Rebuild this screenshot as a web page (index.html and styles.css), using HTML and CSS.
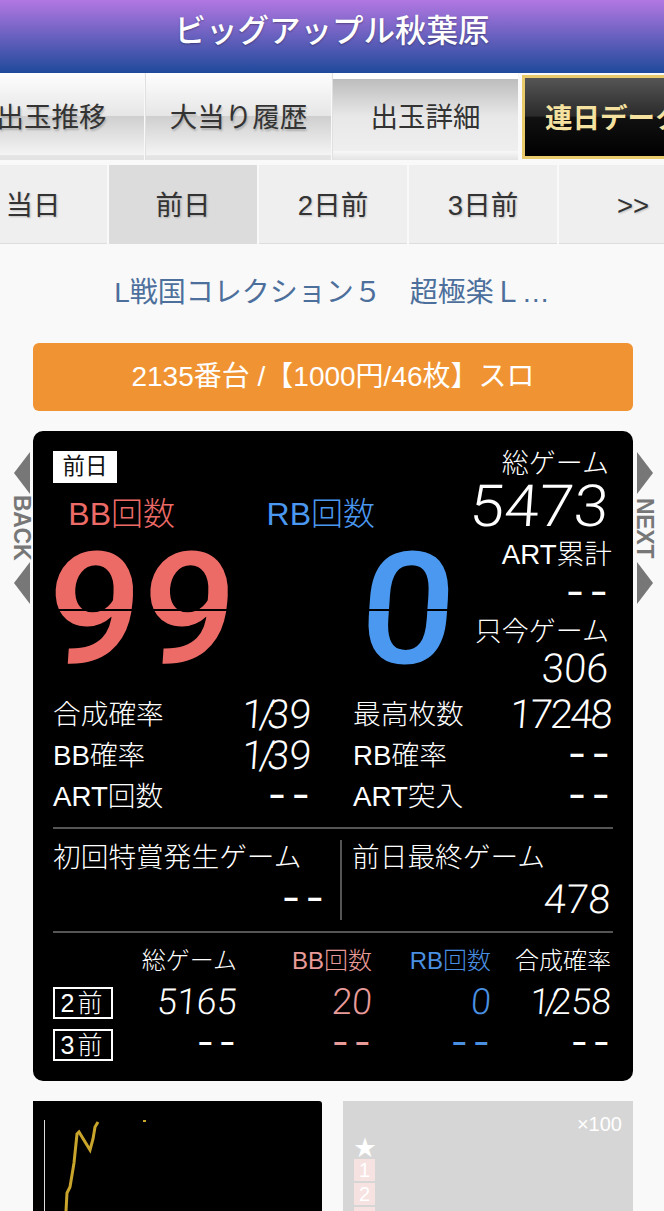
FILE: index.html
```html
<!DOCTYPE html>
<html lang="ja">
<head>
<meta charset="utf-8">
<title>ビッグアップル秋葉原</title>
<link rel="stylesheet" href="styles.css">
</head>
<body>
<header class="site-header">ビッグアップル秋葉原</header>
<nav class="tabs-main">
  <a class="tab">出玉推移</a>
  <a class="tab">大当り履歴</a>
  <a class="tab tab-current">出玉詳細</a>
  <a class="tab tab-gold">連日データ</a>
</nav>
<nav class="tabs-day">
  <a class="day">当日</a>
  <a class="day day-current">前日</a>
  <a class="day">2日前</a>
  <a class="day">3日前</a>
  <a class="day">&gt;&gt;</a>
</nav>
<h1 class="machine">L戦国コレクション５　超極楽Ｌ…</h1>
<div class="unit-bar">2135番台 /【1000円/46枚】スロ</div>
<main class="panel-wrap">
  <div class="side side-back">
    <svg class="tri" viewBox="0 0 16 42"><polygon points="16,0 0,21 16,42" /></svg>
    <span class="side-label">BACK</span>
    <svg class="tri" viewBox="0 0 16 42"><polygon points="16,0 0,21 16,42" /></svg>
  </div>
  <div class="side side-next">
    <svg class="tri" viewBox="0 0 16 42"><polygon points="0,0 16,21 0,42" /></svg>
    <span class="side-label">NEXT</span>
    <svg class="tri" viewBox="0 0 16 42"><polygon points="0,0 16,21 0,42" /></svg>
  </div>
  <section class="panel">
    <div class="top">
      <div class="top-left">
        <div class="badge">前日</div>
        <div class="counters">
          <div class="counter counter-bb">
            <div class="counter-label">BB回数</div>
            <div class="big-num"><span class="seg">99</span></div>
          </div>
          <div class="counter counter-rb">
            <div class="counter-label">RB回数</div>
            <div class="big-num"><span class="seg">0</span></div>
          </div>
        </div>
      </div>
      <div class="top-right">
        <div class="tr-label">総ゲーム</div>
        <div class="tr-big"><span class="seg">5473</span></div>
        <div class="tr-label tr-gap1 tr-art">ART累計</div>
        <div class="dash-line"><span class="seg dash">– –</span></div>
        <div class="tr-label tr-gap2">只今ゲーム</div>
        <div class="tr-mid"><span class="seg">306</span></div>
      </div>
    </div>
    <div class="stats">
      <div class="stat"><span>合成確率</span><span class="seg"><span class="rate">1/</span>39</span></div>
      <div class="stat"><span>最高枚数</span><span class="seg narrow">17248</span></div>
      <div class="stat"><span>BB確率</span><span class="seg"><span class="rate">1/</span>39</span></div>
      <div class="stat"><span>RB確率</span><span class="seg dash">– –</span></div>
      <div class="stat"><span>ART回数</span><span class="seg dash">– –</span></div>
      <div class="stat"><span>ART突入</span><span class="seg dash">– –</span></div>
    </div>
    <div class="firsts">
      <div class="first first-a">
        <div class="first-label">初回特賞発生ゲーム</div>
        <div class="first-val"><span class="seg dash">– –</span></div>
      </div>
      <div class="first first-b">
        <div class="first-label">前日最終ゲーム</div>
        <div class="first-val"><span class="seg">478</span></div>
      </div>
    </div>
    <div class="history">
      <div class="h-head"></div>
      <div class="h-head">総ゲーム</div>
      <div class="h-head c-bb">BB回数</div>
      <div class="h-head c-rb">RB回数</div>
      <div class="h-head">合成確率</div>

      <div class="h-day"><span class="h-box">2前</span></div>
      <div class="h-val"><span class="seg">5165</span></div>
      <div class="h-val c-bb"><span class="seg">20</span></div>
      <div class="h-val c-rb"><span class="seg">0</span></div>
      <div class="h-val"><span class="seg"><span class="rate">1/</span>258</span></div>

      <div class="h-day"><span class="h-box">3前</span></div>
      <div class="h-val"><span class="seg dash">– –</span></div>
      <div class="h-val c-bb"><span class="seg dash">– –</span></div>
      <div class="h-val c-rb"><span class="seg dash">– –</span></div>
      <div class="h-val"><span class="seg dash">– –</span></div>
    </div>
  </section>
</main>
<section class="charts">
  <div class="chart-line">
    <svg class="chart-svg" viewBox="0 0 289 200">
      <line x1="11.5" y1="19" x2="11.5" y2="200" class="axis" />
      <polyline class="trace" points="33,110 34,92 37,86 41,62 44,33 46,31 57,49 60,38 62,26 65,21" />
      <line x1="110" y1="20" x2="113" y2="20" class="trace-dot" />
    </svg>
  </div>
  <div class="chart-bars">
    <div class="scale">×100</div>
    <div class="star">★</div>
    <div class="rank">1</div>
    <div class="rank">2</div>
    <div class="rank">3</div>
  </div>
</section>
</body>
</html>
```
FILE: styles.css
```css
* { box-sizing: border-box; }
html, body { margin: 0; padding: 0; }
body {
  width: 664px;
  height: 1211px;
  overflow: hidden;
  background: #f9f9f9;
  font-family: "Liberation Sans", "Noto Sans CJK JP", sans-serif;
  color: #222;
}
.site-header {
  height: 73px;
  background: linear-gradient(#b277e2, #1f4a9b);
  color: #fff;
  font-size: 31.5px;
  font-weight: 500;
  line-height: 62px;
  text-align: center;
  text-shadow: 0 1px 2px rgba(0, 0, 0, .35);
}
.tabs-main {
  display: flex;
  gap: 1px;
  height: 92px;
  margin-left: -42px;
  padding-bottom: 5px;
  white-space: nowrap;
}
.tab {
  flex: 0 0 186px;
  height: 87px;
  padding-top: 28px;
  font-size: 27.5px;
  line-height: 34px;
  text-align: center;
  color: #333;
  text-shadow: 1px 2px 2px rgba(0, 0, 0, .2);
  background: linear-gradient(#fefefe 0, #e6e6e6 49%, #cfcfcf 50%, #f4f4f4 94%, #e4e4e4 95%);
  border-left: 1px solid #e0e0e0;
}
.tab-current {
  padding-top: 28px;
  margin-left: 0;
  background: linear-gradient(#fff 0 6px, #bdbdbd 6px, #e8e8e8 50%, #efefef 90%, #f7f7f7 90%, #e4e4e4 100%);
  text-shadow: none;
}
.tab-gold {
  flex: 0 0 190px;
  margin-left: 3px;
  margin-top: 2px;
  height: 84px;
  padding: 24px 0 0 20px;
  text-align: left;
  color: #f5e2a0;
  font-weight: 700;
  text-shadow: none;
  border: 3px solid #e9ca6a;
  background: linear-gradient(#555 0, #2a2a2a 49%, #111 50%, #000 100%);
}
.tabs-day {
  display: flex;
  gap: 2px;
  height: 79px;
  margin-left: -41px;
  white-space: nowrap;
}
.day {
  flex: 0 0 148px;
  font-size: 27.5px;
  line-height: 82px;
  text-align: center;
  color: #333;
  background: #efefef;
  text-shadow: 1px 1px 2px rgba(0, 0, 0, .2);
  border-bottom: 1px solid #ddd;
}
.day-current { background: #dcdcdc; }
.machine {
  margin: 0;
  height: 99px;
  padding-top: 30px;
  font-size: 28px;
  line-height: 38px;
  font-weight: 400;
  text-align: center;
  color: #4c6f9c;
}
.unit-bar {
  height: 68px;
  margin: 0 31px 20px 33px;
  background: #f09433;
  border-radius: 6px;
  color: #fff;
  font-size: 28px;
  line-height: 68px;
  text-align: center;
}
.panel-wrap {
  position: relative;
  margin: 0 31px 20px 33px;
}
.side {
  position: absolute;
  top: 21px;
  width: 18px;
  display: flex;
  flex-direction: column;
  align-items: center;
  color: #777;
}
.side-back { left: -20px; }
.side-next { right: -21px; }
.tri { display: block; width: 16px; height: 42px; fill: #777; }
.side-label {
  writing-mode: vertical-rl;
  font-size: 23px;
  font-weight: 700;
  line-height: 18px;
  height: 68px;
  letter-spacing: -.3px;
  text-align: center;
}
.panel {
  height: 650px;
  padding: 16px 20px 0;
  background: #000;
  border-radius: 10px;
  color: #fff;
  font-size: 27.7px;
  font-weight: 300;
}
.seg {
  display: inline-block;
  font-family: Roboto, "Liberation Sans", sans-serif;
  font-weight: 300;
  font-variant-numeric: tabular-nums;
  transform: skewX(-4deg);
  transform-origin: right center;
  white-space: pre;
}
.rate { letter-spacing: -5px; margin-right: -3px; }
.narrow { letter-spacing: -2px; }
.dash {
  font-weight: 900;
  word-spacing: 2px;
  margin-right: 3px;
  transform: none;
}
.top {
  display: flex;
  justify-content: space-between;
  height: 247px;
}
.top-left { width: 420px; }
.badge {
  width: 64px;
  height: 32px;
  margin-top: 4px;
  background: #fff;
  color: #111;
  font-size: 22.5px;
  font-weight: 400;
  line-height: 32px;
  text-align: center;
}
.counters { display: flex; }
.counter-bb { width: 189px; color: #ec6b67; }
.counter-rb { width: 215px; color: #4a98f0; }
.counter-label {
  margin-top: 11px;
  height: 40px;
  font-size: 32px;
  line-height: 40px;
  text-align: right;
  padding-right: 67px;
}
.counter-rb .counter-label { padding-right: 82px; }
.big-num {
  height: 118px;
  margin-top: 16px;
  text-align: right;
  padding-right: 6px;
  font-size: 156px;
  line-height: 118px;
}
.counter-rb .big-num { padding-right: 1px; }
.big-num .seg {
  position: relative;
  font-weight: 500;
  transform: skewX(-4deg) scaleX(1.07);
}
.big-num .seg::after {
  content: "";
  position: absolute;
  left: 0;
  right: 0;
  top: 58px;
  height: 2px;
  background: #000;
}
.top-right { width: 140px; padding-right: 4px; text-align: right; }
.tr-label { height: 34px; line-height: 34px; font-size: 27px; }
.tr-art { margin-right: -3px; font-size: 27.7px; }
.tr-gap1 { margin-top: 11px; }
.tr-gap2 { margin-top: 9px; }
.tr-big { height: 43px; margin-top: 3px; font-size: 58px; line-height: 43px; }
.tr-big .seg { transform: skewX(-4deg) scaleX(1.08); }
.tr-mid { height: 30px; margin-top: 4px; font-size: 40px; line-height: 30px; }
.dash-line { height: 34px; font-size: 25px; line-height: 34px; }
.dash-line .dash { transform: translateY(4px); }
.stats {
  display: grid;
  grid-template-columns: 258px 258px;
  column-gap: 42px;
  grid-auto-rows: 41px;
  height: 135px;
  border-bottom: 2px solid #555;
}
.stat {
  display: flex;
  justify-content: space-between;
  line-height: 41px;
}
.stat .seg { font-size: 40px; line-height: 41px; }
.stat .seg.dash { font-size: 25px; }
.firsts {
  display: flex;
  height: 104px;
  padding-top: 11px;
  border-bottom: 2px solid #555;
}
.first-a {
  width: 289px;
  height: 80px;
  padding-right: 15px;
  border-right: 2px solid #555;
}
.first-b { width: 259px; margin-left: 10px; }
.first-label { line-height: 36px; margin-bottom: 4px; white-space: nowrap; }
.first-val {
  height: 38px;
  text-align: right;
  font-size: 40px;
  line-height: 38px;
}
.first-val .dash { font-size: 25px; transform: translateY(-5px); }
.history {
  display: grid;
  grid-template-columns: 60px 124px 135px 119px 120px;
  grid-template-rows: 49px 42px 42px;
  font-size: 24px;
}
.h-head { text-align: right; line-height: 56px; white-space: nowrap; }
.h-val { text-align: right; font-size: 36px; line-height: 40px; }
.h-val .dash { font-size: 23px; transform: translateY(-4px); }
.h-day { display: flex; align-items: center; }
.h-box {
  width: 60px;
  height: 32px;
  border: 2px solid #fff;
  font-size: 25px;
  line-height: 28px;
  letter-spacing: 3px;
  text-align: center;
}
.c-bb { color: #e89b98; }
.c-rb { color: #4a90e2; }
.charts {
  display: flex;
  gap: 21px;
  margin: 0 31px 0 33px;
}
.chart-line {
  flex: 0 0 289px;
  height: 200px;
  background: #000;
  border-top-right-radius: 3px;
}
.chart-svg { display: block; width: 289px; height: 200px; }
.axis { stroke: #ddd; stroke-width: 1; }
.trace { fill: none; stroke: #c9a52c; stroke-width: 3; }
.trace-dot { stroke: #c9a52c; stroke-width: 2; }
.chart-bars {
  flex: 0 0 290px;
  height: 200px;
  padding: 10px 0 0 11px;
  background: #d6d6d6;
  color: #fff;
}
.scale {
  padding-right: 11px;
  font-size: 20px;
  line-height: 26px;
  text-align: right;
}
.star { height: 22px; font-size: 22px; line-height: 22px; }
.rank {
  width: 21px;
  height: 22px;
  margin-bottom: 2px;
  background: #f7e2e2;
  font-size: 20px;
  line-height: 22px;
  text-align: center;
}
```
